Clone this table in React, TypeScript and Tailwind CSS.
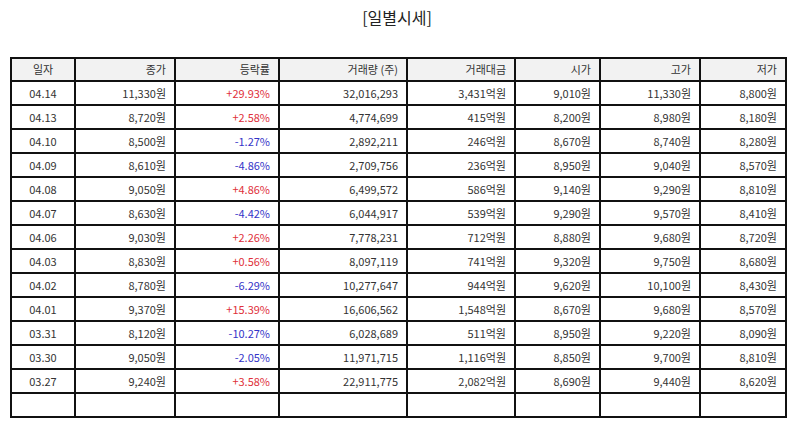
import React from "react";

const rows: [string, string, string, string, string, string, string, string][] = [
  ["04.14", "11,330원", "+29.93%", "32,016,293", "3,431억원", "9,010원", "11,330원", "8,800원"],
  ["04.13", "8,720원", "+2.58%", "4,774,699", "415억원", "8,200원", "8,980원", "8,180원"],
  ["04.10", "8,500원", "-1.27%", "2,892,211", "246억원", "8,670원", "8,740원", "8,280원"],
  ["04.09", "8,610원", "-4.86%", "2,709,756", "236억원", "8,950원", "9,040원", "8,570원"],
  ["04.08", "9,050원", "+4.86%", "6,499,572", "586억원", "9,140원", "9,290원", "8,810원"],
  ["04.07", "8,630원", "-4.42%", "6,044,917", "539억원", "9,290원", "9,570원", "8,410원"],
  ["04.06", "9,030원", "+2.26%", "7,778,231", "712억원", "8,880원", "9,680원", "8,720원"],
  ["04.03", "8,830원", "+0.56%", "8,097,119", "741억원", "9,320원", "9,750원", "8,680원"],
  ["04.02", "8,780원", "-6.29%", "10,277,647", "944억원", "9,620원", "10,100원", "8,430원"],
  ["04.01", "9,370원", "+15.39%", "16,606,562", "1,548억원", "8,670원", "9,680원", "8,570원"],
  ["03.31", "8,120원", "-10.27%", "6,028,689", "511억원", "8,950원", "9,220원", "8,090원"],
  ["03.30", "9,050원", "-2.05%", "11,971,715", "1,116억원", "8,850원", "9,700원", "8,810원"],
  ["03.27", "9,240원", "+3.58%", "22,911,775", "2,082억원", "8,690원", "9,440원", "8,620원"],
];

const headers = ["일자", "종가", "등락률", "거래량 (주)", "거래대금", "시가", "고가", "저가"];
const widths = ["w-[64px]", "w-[100px]", "w-[104px]", "w-[128px]", "w-[108px]", "w-[85px]", "w-[100px]", "w-[86px]"];

export default function App() {
  return (
    <div
      className="w-[794px] h-[425px] bg-white text-[#333]"
      style={{ fontFamily: '"Noto Sans CJK KR", "Noto Sans", sans-serif' }}
    >
      <div className="pt-[6px] h-[57px] text-center text-[16px] leading-[22px] text-[#222]">[일별시세]</div>
      <div className="px-[10px]">
        <table className="border-collapse table-fixed w-[776px] text-[11px] leading-none">
          <colgroup>
            {widths.map((w, i) => (
              <col key={i} className={w} />
            ))}
          </colgroup>
          <thead>
            <tr className="h-[23px] bg-[#f2f2f2]">
              {headers.map((h, i) => (
                <th
                  key={i}
                  className={`border-2 border-[#111] font-normal p-0 ${i === 0 ? "text-center" : "text-right pr-[8px]"}`}
                >
                  {h}
                </th>
              ))}
            </tr>
          </thead>
          <tbody>
            {rows.map((r, ri) => (
              <tr key={ri} className="h-[24px]">
                {r.map((c, ci) => {
                  let color = "";
                  if (ci === 2) color = c.startsWith("+") ? "text-[#e0303a]" : "text-[#3434c8]";
                  return (
                    <td
                      key={ci}
                      className={`border-2 border-[#111] p-0 ${ci === 0 ? "text-center" : "text-right pr-[8px]"} ${color}`}
                    >
                      {c}
                    </td>
                  );
                })}
              </tr>
            ))}
            <tr className="h-[24px]">
              {headers.map((_, i) => (
                <td key={i} className="border-2 border-[#111] p-0"></td>
              ))}
            </tr>
          </tbody>
        </table>
      </div>
    </div>
  );
}
